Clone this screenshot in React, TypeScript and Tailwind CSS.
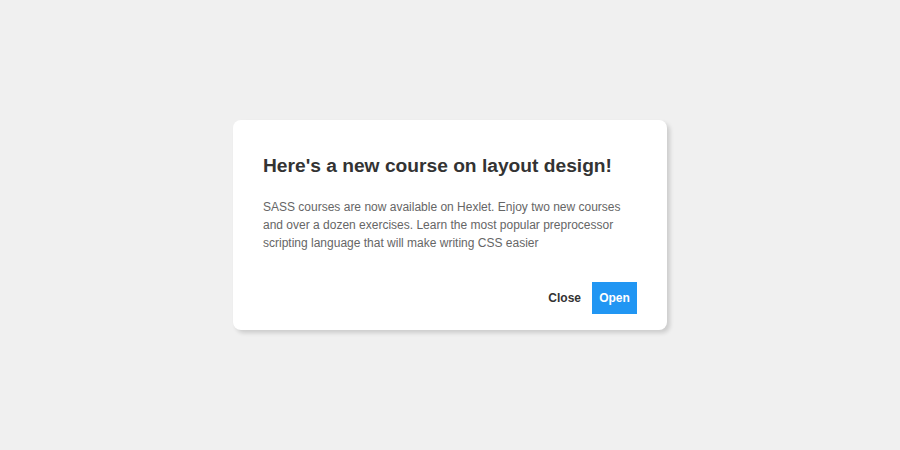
const App = () => {
  return (
    <div
      className="w-[900px] h-[450px] bg-[#f0f0f0] flex items-center justify-center"
      style={{ fontFamily: '"Liberation Sans", Arial, sans-serif' }}
    >
      <div className="w-[434px] bg-white rounded-lg shadow-[3px_3px_4px_rgba(0,0,0,0.15)] pt-[34px] px-[30px] pb-[16px]">
        <h2 className="text-[19.2px] font-bold text-[#333] leading-[23px]">
          Here's a new course on layout design!
        </h2>
        <p className="mt-[21px] text-[12px] leading-[18px] text-[#666]">
          SASS courses are now available on Hexlet. Enjoy two new courses and
          over a dozen exercises. Learn the most popular preprocessor scripting
          language that will make writing CSS easier
        </p>
        <div className="flex justify-end items-center gap-[11px] mt-[30px]">
          <button type="button" className="text-[12px] font-bold text-[#333]">
            Close
          </button>
          <button
            type="button"
            className="bg-[#2196f3] text-white text-[12px] font-bold w-[45px] h-[32px]"
          >
            Open
          </button>
        </div>
      </div>
    </div>
  );
};

export default App;
